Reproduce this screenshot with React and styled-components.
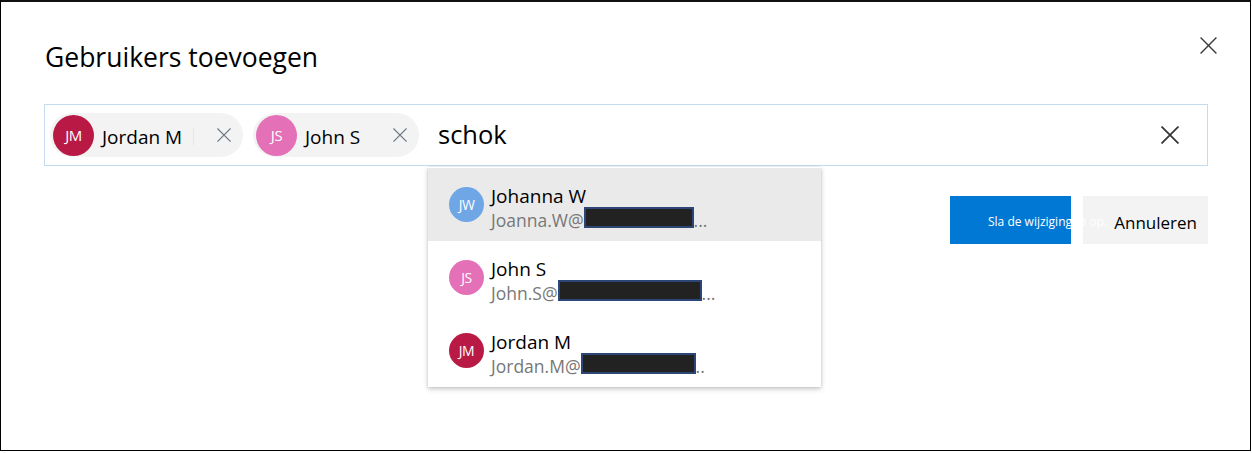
import React from "react";
import styled, { createGlobalStyle } from "styled-components";

const GlobalStyle = createGlobalStyle`
  html, body {
    margin: 0;
    padding: 0;
    background: #ffffff;
  }
  body {
    font-family: "Open Sans", "Noto Sans", sans-serif;
    color: #000;
  }
`;

const selected = [
  { initials: "JM", name: "Jordan M", color: "#b81a45", width: 193, divider: true },
  { initials: "JS", name: "John S", color: "#e470b8", width: 166 },
];

const suggestions = [
  { initials: "JW", name: "Johanna W", mail: "Joanna.W@", box: 110, dots: "...", color: "#6fa6e6", active: true },
  { initials: "JS", name: "John S", mail: "John.S@", box: 144, dots: "...", color: "#e470b8" },
  { initials: "JM", name: "Jordan M", mail: "Jordan.M@", box: 115, dots: "..", color: "#b81a45" },
];

const CloseIcon = ({ size = 16, stroke = "#333", width = 1.4 }) => (
  <svg width={size} height={size} viewBox="0 0 16 16" fill="none">
    <path d="M1 1 L15 15 M15 1 L1 15" stroke={stroke} strokeWidth={width} strokeLinecap="square" />
  </svg>
);

const App = () => {
  return (
    <>
      <GlobalStyle />
      <Frame>
        <Dialog>
          <DialogClose aria-label="Sluiten">
            <CloseIcon size={17} stroke="#3a3a3a" width={1.3} />
          </DialogClose>
          <Title>Gebruikers toevoegen</Title>

          <PickerWrap>
            <Picker>
              {selected.map((p) => (
                <Chip key={p.name} $width={p.width}>
                  <Avatar $color={p.color} $size={41} $font={15}>
                    {p.initials}
                  </Avatar>
                  <ChipName>{p.name}</ChipName>
                  {p.divider && <ChipSeparator />}
                  <ChipRemove>
                    <CloseIcon size={14} stroke="#6b7682" width={1.4} />
                  </ChipRemove>
                </Chip>
              ))}
              <Query>schok</Query>
              <ClearButton aria-label="Wissen">
                <CloseIcon size={18} stroke="#333" width={1.5} />
              </ClearButton>
            </Picker>

            <Suggestions>
              {suggestions.map((s) => (
                <Suggestion key={s.name} $active={s.active}>
                  <Avatar $color={s.color} $size={35} $font={14}>
                    {s.initials}
                  </Avatar>
                  <SuggestionText>
                    <SuggestionName>{s.name}</SuggestionName>
                    <SuggestionMail>
                      {s.mail}
                      <Redacted style={{ width: s.box }} />
                      {s.dots}
                    </SuggestionMail>
                  </SuggestionText>
                </Suggestion>
              ))}
            </Suggestions>

            <Actions>
              <PrimaryButton>
                <PrimaryLabel>Sla de wijzigingen op.</PrimaryLabel>
              </PrimaryButton>
              <SecondaryButton>Annuleren</SecondaryButton>
            </Actions>
          </PickerWrap>
        </Dialog>
      </Frame>
    </>
  );
};

const Frame = styled.div`
  box-sizing: border-box;
  width: 1251px;
  height: 451px;
  border: 1.5px solid #000;
  border-top: 2px solid #111;
  background: #fff;
  overflow: hidden;
`;

const Dialog = styled.div`
  position: relative;
  padding: 37px 42px 0 43px;
`;

const DialogClose = styled.button`
  position: absolute;
  top: 35px;
  right: 33px;
  border: 0;
  padding: 0;
  background: none;
  display: flex;
`;

const Title = styled.h1`
  margin: 0 0 0 1px;
  font-size: 26.5px;
  font-weight: 400;
  line-height: 36px;
  letter-spacing: 0;
`;

const PickerWrap = styled.div`
  position: relative;
  margin-top: 29px;
`;

const Picker = styled.div`
  box-sizing: border-box;
  height: 62px;
  border: 1px solid #c3dcf2;
  display: flex;
  align-items: center;
  padding: 0 28px 0 5px;
`;

const Chip = styled.div`
  box-sizing: border-box;
  flex: none;
  width: ${(p) => p.$width}px;
  display: flex;
  align-items: center;
  height: 44px;
  border-radius: 22px;
  background: #f3f3f3;
  padding: 0 12px 0 3px;
  margin-right: 10px;
`;

const Avatar = styled.div`
  flex: none;
  width: ${(p) => p.$size}px;
  height: ${(p) => p.$size}px;
  border-radius: 50%;
  background: ${(p) => p.$color};
  color: #fff;
  display: flex;
  align-items: center;
  justify-content: center;
  font-size: ${(p) => p.$font}px;
  letter-spacing: -0.5px;
`;

const ChipName = styled.span`
  font-size: 19px;
  margin-left: 8px;
  margin-top: 3px;
`;

const ChipSeparator = styled.span`
  width: 1px;
  height: 17px;
  background: #d5ecef;
  margin-left: 11px;
  margin-top: 3px;
`;

const ChipRemove = styled.span`
  display: flex;
  margin-left: auto;
`;

const Query = styled.span`
  flex: 1;
  font-size: 25.5px;
  margin-left: 9px;
  margin-top: -3px;
`;

const ClearButton = styled.button`
  border: 0;
  padding: 0;
  background: none;
  display: flex;
`;

const Suggestions = styled.div`
  position: absolute;
  top: 63px;
  left: 384px;
  width: 393px;
  background: #fff;
  box-shadow: 0 2px 5px rgba(0, 0, 0, 0.22), 0 0 2px rgba(0, 0, 0, 0.12);
  padding: 1px 0 0;
  z-index: 2;
`;

const Suggestion = styled.div`
  display: flex;
  align-items: center;
  height: 73px;
  padding: 0 0 0 21px;
  background: ${(p) => (p.$active ? "#eaeaea" : "#fff")};
`;

const SuggestionText = styled.div`
  display: flex;
  flex-direction: column;
  margin-left: 7px;
  margin-top: 9px;
`;

const SuggestionName = styled.span`
  font-size: 19px;
  line-height: 22px;
`;

const SuggestionMail = styled.span`
  font-size: 17.5px;
  line-height: 22px;
  color: #777;
  display: flex;
  align-items: center;
  white-space: nowrap;
`;

const Redacted = styled.span`
  box-sizing: border-box;
  height: 21px;
  margin-bottom: 6px;
  background: #222;
  border: 2px solid #2c4677;
`;

const Actions = styled.div`
  display: flex;
  justify-content: flex-end;
  gap: 12px;
  margin-top: 30px;
`;

const PrimaryButton = styled.button`
  position: relative;
  width: 121px;
  height: 48px;
  border: 0;
  background: #0078d4;
  padding: 0;
  z-index: 1;
`;

const PrimaryLabel = styled.span`
  position: absolute;
  left: 38px;
  top: 17px;
  white-space: nowrap;
  color: #fff;
  font-family: "Open Sans", "Noto Sans", sans-serif;
  font-size: 12px;
`;

const SecondaryButton = styled.button`
  width: 125px;
  height: 48px;
  border: 0;
  background: #f3f3f3;
  font-family: "Open Sans", "Noto Sans", sans-serif;
  font-size: 17px;
  color: #000;
  text-align: right;
  padding: 4px 11px 0 0;
`;

export default App;
